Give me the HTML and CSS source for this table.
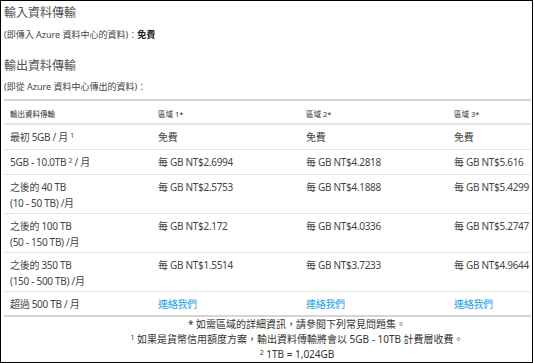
FILE: index.html
```html
<!DOCTYPE html>
<html lang="zh-Hant">
  <head>
    <meta charset="UTF-8" />
    <meta name="viewport" content="width=device-width, initial-scale=1.0" />
    <link rel="stylesheet" href="styles.css">
    <title>資料傳輸價格</title>
  </head>
  <body>
    <div class="page">
      <h2>輸入資料傳輸</h2>
      <p class="note">(即傳入 Azure 資料中心的資料)：<strong>免費</strong></p>

      <h2 class="section">輸出資料傳輸</h2>
      <p class="note note-out">(即從 Azure 資料中心傳出的資料)：</p>

      <table class="pricing">
        <colgroup>
          <col class="col-wide" />
          <col class="col-wide" />
          <col class="col-wide" />
          <col />
        </colgroup>
        <thead>
          <tr>
            <th>輸出資料傳輸</th>
            <th>區域 1*</th>
            <th>區域 2*</th>
            <th>區域 3*</th>
          </tr>
        </thead>
        <tbody>
          <tr>
            <td>最初 5GB / 月 <sup>1</sup></td>
            <td>免費</td>
            <td>免費</td>
            <td>免費</td>
          </tr>
          <tr>
            <td>5GB - 10.0TB <sup>2</sup> / 月</td>
            <td>每 GB NT$2.6994</td>
            <td>每 GB NT$4.2818</td>
            <td>每 GB NT$5.616</td>
          </tr>
          <tr class="tall">
            <td>之後的 40 TB<br>(10 - 50 TB) /月</td>
            <td>每 GB NT$2.5753</td>
            <td>每 GB NT$4.1888</td>
            <td>每 GB NT$5.4299</td>
          </tr>
          <tr class="tall">
            <td>之後的 100 TB<br>(50 - 150 TB) /月</td>
            <td>每 GB NT$2.172</td>
            <td>每 GB NT$4.0336</td>
            <td>每 GB NT$5.2747</td>
          </tr>
          <tr class="tall">
            <td>之後的 350 TB<br>(150 - 500 TB) /月</td>
            <td>每 GB NT$1.5514</td>
            <td>每 GB NT$3.7233</td>
            <td>每 GB NT$4.9644</td>
          </tr>
          <tr>
            <td>超過 500 TB / 月</td>
            <td><a href="#">連絡我們</a></td>
            <td><a href="#">連絡我們</a></td>
            <td><a href="#">連絡我們</a></td>
          </tr>
        </tbody>
      </table>

      <div class="footnotes">
        <p>* 如需區域的詳細資訊，請參閱下列常見問題集。</p>
        <p><sup>1</sup> 如果是貨幣信用額度方案，輸出資料傳輸將會以 5GB - 10TB 計費層收費。</p>
        <p><sup>2</sup> 1TB = 1,024GB</p>
      </div>
    </div>
  </body>
</html>
```

FILE: styles.css
```css
html,
body {
  margin: 0;
  padding: 0;
  height: 100%;
}

body {
  box-sizing: border-box;
  width: 533px;
  border: 1px solid #000;
  background-color: white;
  color: #454545;
  font-family: "Noto Sans", "Noto Sans CJK TC", sans-serif;
  font-size: 10px;
  overflow: hidden;
}

.page {
  padding: 1px 2px 0 3px;
}

h2 {
  margin: 0;
  font-size: 12px;
  font-weight: normal;
  line-height: 22px;
  color: #505050;
}

h2.section {
  margin-top: 12px;
}

.note {
  margin: 3px 0 0 0;
  font-size: 9px;
  line-height: 16px;
}

.note-out {
  margin-top: 2px;
}

.note strong {
  color: #222;
}

.pricing {
  width: 527px;
  margin-top: 4px;
  table-layout: fixed;
  border-collapse: collapse;
  border-top: 2px solid #d4d4d4;
  border-bottom: 2px solid #d4d4d4;
}

.col-wide {
  width: 148px;
}

.pricing tr {
  height: 25px;
}

.pricing tr.tall {
  height: 39px;
}

.pricing th,
.pricing td {
  text-align: left;
  vertical-align: top;
  white-space: nowrap;
  padding: 4px 5px 2px 6px;
  line-height: 16px;
  border-bottom: 1px solid #e6e6e6;
}

.pricing td {
  letter-spacing: -0.3px;
}

.pricing th {
  font-size: 7.5px;
  font-weight: normal;
  color: #333;
  padding: 5px 5px 1px 6px;
  border-bottom: 2px solid #e6e6e6;
}

.pricing thead tr {
  height: 24px;
}

.pricing tr:last-child td {
  border-bottom: none;
}

.pricing sup {
  font-size: 7px;
  vertical-align: 3px;
  line-height: 0;
}

.pricing a {
  color: #1ba1e2;
  text-decoration: none;
}

.footnotes {
  padding-left: 60px;
  text-align: center;
  font-size: 10px;
  color: #333;
}

.footnotes p {
  margin: 0;
  line-height: 15px;
}

.footnotes sup {
  font-size: 7px;
  vertical-align: 3px;
  line-height: 0;
}
```
